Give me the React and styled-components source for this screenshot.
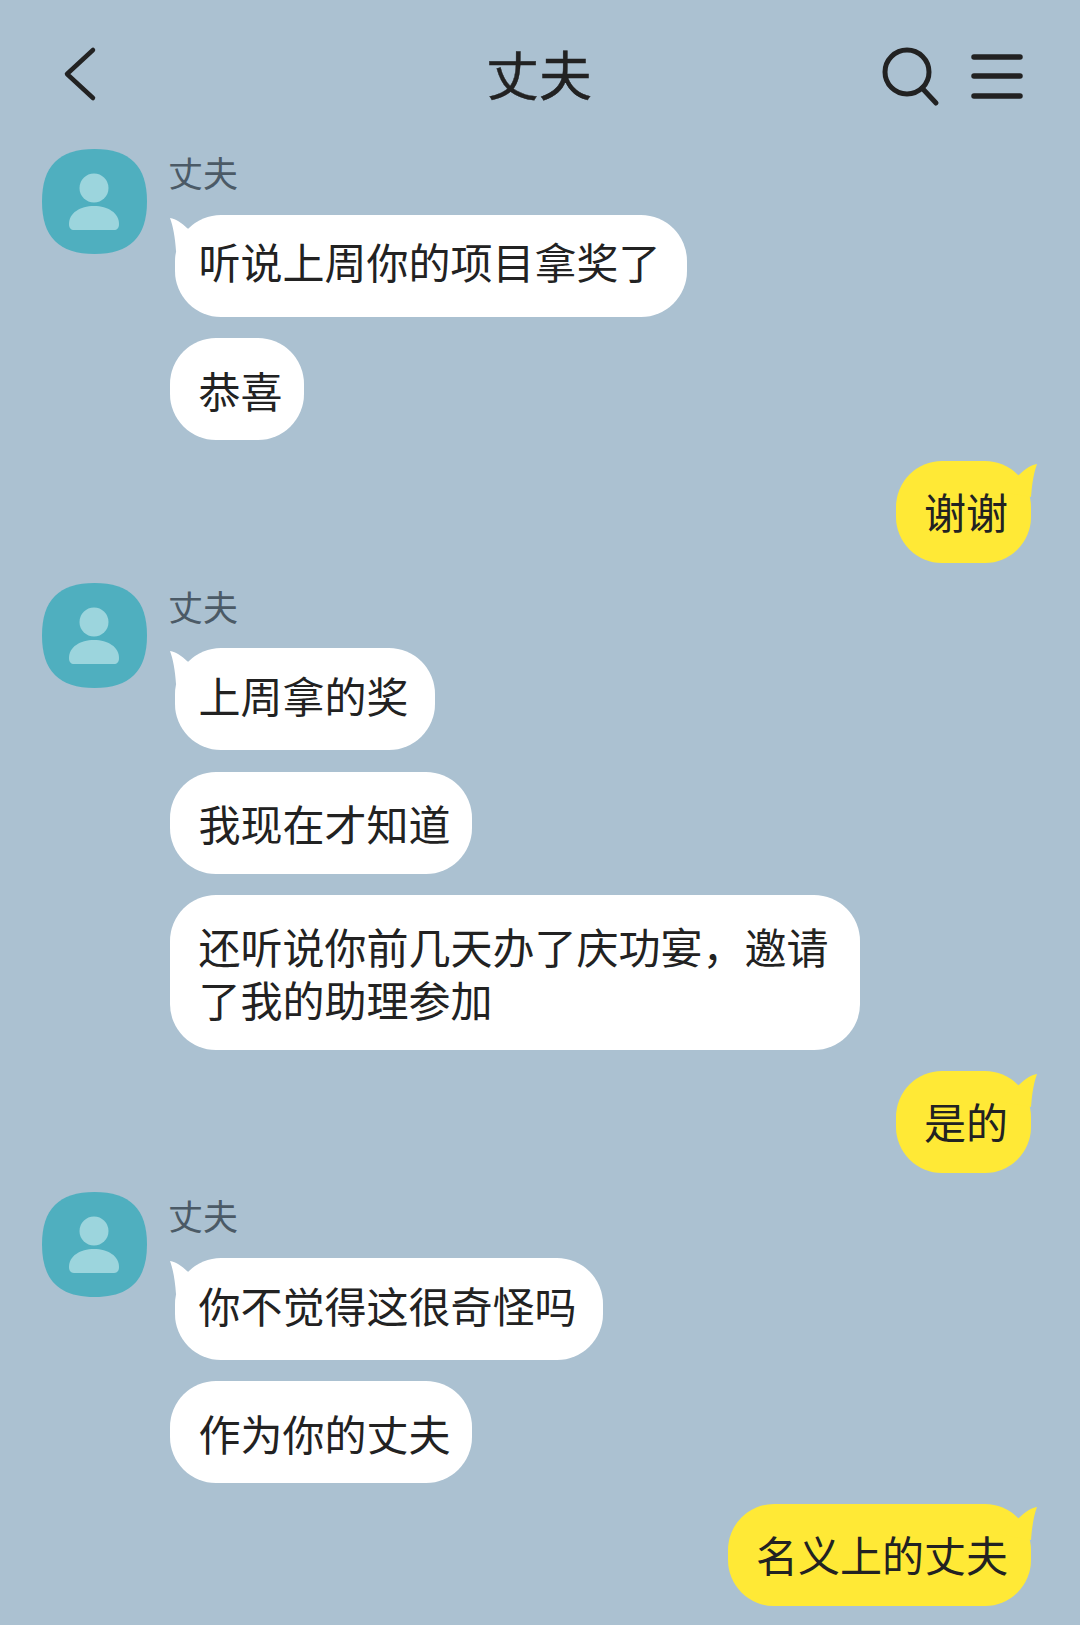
import React from 'react';
import styled, { createGlobalStyle } from 'styled-components';

const GlobalStyle = createGlobalStyle`
  html, body {
    margin: 0;
    padding: 0;
    background: #abc1d1;
  }
`;

const Screen = styled.div`
  width: 1080px;
  height: 1625px;
  overflow: hidden;
  background: #abc1d1;
  color: #222;
  font-family: "Noto Sans CJK SC", "Noto Sans", sans-serif;
`;

const Header = styled.header`
  height: 149px;
  box-sizing: border-box;
  padding: 46px 52px 0 50px;
  display: grid;
  grid-template-columns: 1fr auto 1fr;
  align-items: start;
`;

const Title = styled.h1`
  margin: -3px 0 0;
  font-size: 53px;
  font-weight: 400;
  line-height: 60px;
  -webkit-text-stroke: 0.4px #222;
`;

const HeaderActions = styled.div`
  display: flex;
  justify-content: flex-end;
  gap: 30px;
`;

const Icon = styled.svg`
  display: block;
  width: 60px;
  height: 60px;
  overflow: visible;
  fill: none;
  stroke: #222;
  stroke-width: ${({ $weight }) => $weight};
  stroke-linecap: round;
  stroke-linejoin: round;
`;

const Messages = styled.main`
  display: flex;
  flex-direction: column;
  padding: 0 49px 0 42px;
`;

const Group = styled.section`
  display: grid;
  grid-template-columns: 105px 1fr;
  column-gap: 23px;
  margin-bottom: 21px;
`;

const AvatarMark = styled.svg`
  display: block;
  width: 105px;
  height: 105px;
`;

const Stack = styled.div`
  display: flex;
  flex-direction: column;
  align-items: flex-start;
  gap: 21.25px;
`;

const Name = styled.div`
  height: 44.5px;
  box-sizing: border-box;
  margin-left: -2px;
  padding-top: 3px;
  font-size: 35px;
  line-height: 40px;
  color: #4b5a66;
`;

const Bubble = styled.div`
  position: relative;
  box-sizing: border-box;
  max-width: 690px;
  padding: 24.5px 21.5px 24.5px 28.5px;
  font-size: 42px;
  line-height: 53px;
  border-radius: 46px;
  background: #fff;
`;

// first bubble of a run: sits 5px in for the tail, text rides a little higher
const TailBubble = styled(Bubble)`
  margin-left: 5px;
  padding: 19.5px 26.5px 29.5px 23.5px;
`;

const MineBubble = styled(Bubble)`
  padding: 23px 23px 26px 28px;
  background: #ffe936;
`;

const Tail = styled.svg`
  position: absolute;
  top: 0;
  width: 40px;
  height: 40px;
  ${({ $mine }) => ($mine ? 'right: -6px; transform: scaleX(-1);' : 'left: -5px;')}
  fill: ${({ $mine }) => ($mine ? '#ffe936' : '#fff')};
`;

const MineRow = styled.div`
  display: flex;
  justify-content: flex-end;
  margin-bottom: 19.5px;
`;

const Avatar = () => (
  <AvatarMark viewBox="0 0 105 105">
    <path
      d="M52.5 0C88 0 105 17 105 52.5S88 105 52.5 105 0 88 0 52.5 17 0 52.5 0Z"
      fill="#4fafbf"
    />
    <circle cx="52" cy="39" r="14.5" fill="#9cd5dd" />
    <path
      d="M27 75c0-11 11-18 25-18s25 7 25 18c0 4-2 6-5 6H32c-3 0-5-2-5-6Z"
      fill="#9cd5dd"
    />
  </AvatarMark>
);

const BubbleTail = ({ mine }) => (
  <Tail $mine={mine} viewBox="0 0 40 40">
    <path d="M0 3C6 4 12 8 17 13L40 30 6 36C5 22 3 11 0 3Z" />
  </Tail>
);

const threads = [
  {
    them: ['听说上周你的项目拿奖了', '恭喜'],
    me: '谢谢',
  },
  {
    them: ['上周拿的奖', '我现在才知道', '还听说你前几天办了庆功宴，邀请了我的助理参加'],
    me: '是的',
  },
  {
    them: ['你不觉得这很奇怪吗', '作为你的丈夫'],
    me: '名义上的丈夫',
  },
];

export default function App() {
  return (
    <Screen>
      <GlobalStyle />
      <Header>
        <Icon $weight={4.5} viewBox="0 0 60 60">
          <path d="M43 4 17 28l26 24" />
        </Icon>
        <Title>丈夫</Title>
        <HeaderActions>
          <Icon $weight={5} viewBox="0 0 60 60">
            <circle cx="29" cy="26" r="22" />
            <path d="M44 42 58 57" />
          </Icon>
          <Icon $weight={5.5} viewBox="0 0 60 60">
            <path d="M6 11h46M6 30h46M6 50h46" />
          </Icon>
        </HeaderActions>
      </Header>
      <Messages>
        {threads.map((thread) => (
          <React.Fragment key={thread.me}>
            <Group>
              <Avatar />
              <Stack>
                <Name>丈夫</Name>
                {thread.them.map((text, i) =>
                  i === 0 ? (
                    <TailBubble key={text}>
                      <BubbleTail />
                      {text}
                    </TailBubble>
                  ) : (
                    <Bubble key={text}>{text}</Bubble>
                  ),
                )}
              </Stack>
            </Group>
            <MineRow>
              <MineBubble>
                <BubbleTail mine />
                {thread.me}
              </MineBubble>
            </MineRow>
          </React.Fragment>
        ))}
      </Messages>
    </Screen>
  );
}
